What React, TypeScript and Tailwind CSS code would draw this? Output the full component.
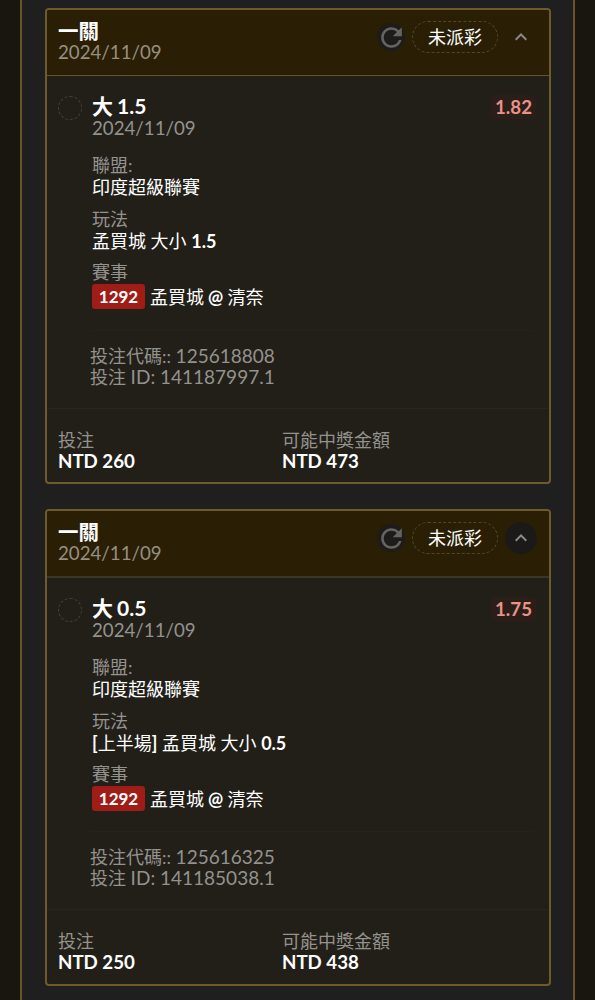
import clsx from 'clsx';
import React from 'react';
import { MdKeyboardArrowUp, MdRefresh } from 'react-icons/md';

interface Bet {
  name: string;
  pick: string;
  date: string;
  odds: string;
  period?: string;
  market: string;
  line: string;
  code: string;
  id: string;
  stake: string;
  payout: string;
  focused: boolean;
}

const bets: Bet[] = [
  {
    name: '一關',
    pick: '大 1.5',
    date: '2024/11/09',
    odds: '1.82',
    market: '孟買城 大小',
    line: '1.5',
    code: '125618808',
    id: '141187997.1',
    stake: 'NTD 260',
    payout: 'NTD 473',
    focused: false,
  },
  {
    name: '一關',
    pick: '大 0.5',
    date: '2024/11/09',
    odds: '1.75',
    period: '上半場',
    market: '孟買城 大小',
    line: '0.5',
    code: '125616325',
    id: '141185038.1',
    stake: 'NTD 250',
    payout: 'NTD 438',
    focused: true,
  },
];

function BetHeader({ bet }: { bet: Bet }) {
  return (
    <div
      className={clsx(
        'flex items-start justify-between bg-[#2a1f05] pl-[11px] pr-3 pt-[10px]',
        bet.focused ? 'h-[67px] border-b-2 border-[#3b3726]' : 'h-[66px] border-b border-[#62542f]'
      )}
    >
      <div>
        <div className="text-[20.5px] font-bold text-white">{bet.name}</div>
        <div className="text-[18.7px] leading-[21px] text-[#978f80]">{bet.date}</div>
      </div>
      <div className="mt-px flex items-center">
        <div className="flex h-7 w-7 items-center justify-center rounded-full bg-[#1e1c1a] text-[#66645f]">
          <MdRefresh size={31} className="shrink-0" />
        </div>
        <div className="ml-[7px] flex h-8 w-[86px] items-center justify-center rounded-full border border-dashed border-[#514729] text-white">
          未派彩
        </div>
        <div
          className={clsx(
            'ml-[7px] flex h-8 w-8 items-center justify-center rounded-full text-[#8d8b86]',
            bet.focused && 'bg-[#1c1a19]'
          )}
        >
          <MdKeyboardArrowUp size={24} />
        </div>
      </div>
    </div>
  );
}

function BetCard({ bet }: { bet: Bet }) {
  return (
    <div
      className={clsx(
        'flex flex-col overflow-hidden rounded border-2 border-[#6f5a2b] bg-[#221f19]',
        bet.focused ? 'h-[477px]' : 'h-[476px]'
      )}
    >
      <BetHeader bet={bet} />

      <div className={clsx('flex pl-[11px] pr-[13px] pt-5', bet.focused ? 'h-[253px]' : 'h-[254px]')}>
        <div className="h-6 w-6 shrink-0 rounded-full border border-dashed border-[#45423b]" />
        <div className="ml-[10px] flex-1">
          <div className="text-[21px] leading-[19px] font-bold text-white [word-spacing:-1px]">{bet.pick}</div>
          <div className="mt-[2px] text-[18.7px] text-[#94928d]">{bet.date}</div>

          <div className="mt-[15px] text-[#94928d]">聯盟:</div>
          <div className="text-white">印度超級聯賽</div>
          <div className="mt-[10px] text-[#94928d]">玩法</div>
          <div className="text-white">
            {bet.period && (
              <>
                <span className="font-bold">[</span>
                {bet.period}
                <span className="font-bold">]</span>{' '}
              </>
            )}
            {bet.market} <span className="font-bold">{bet.line}</span>
          </div>
          <div className="mt-[9px] text-[#94928d]">賽事</div>
          <div className="mt-px flex items-center text-white">
            <span className="mr-[5px] flex h-[25px] w-[53px] items-center justify-center rounded-[3px] bg-[#9f1c17] text-[17px] font-bold">
              1292
            </span>
            <span className="[word-spacing:-0.5px]">
              孟買城 <span className="font-bold">@</span> 清奈
            </span>
          </div>
        </div>
        <div className="-mt-px flex h-6 items-center justify-center rounded bg-[#2b1e18] px-1 text-[18.7px] font-bold text-[#e8938a]">
          {bet.odds}
        </div>
      </div>

      {/* Bet references */}
      <div className="ml-[43px] mr-4 h-[78px] border-t border-[#25221c] pt-[14px] leading-[21px] text-[#94928d]">
        <div>
          投注代碼:: <span className="text-[19px]">{bet.code}</span>
        </div>
        <div className="leading-5">
          投注 <span className="text-[19px]">ID: {bet.id}</span>
        </div>
      </div>

      {/* Stake and payout */}
      <div className="flex flex-1 border-t border-[#28251d] pl-[11px] pt-[21px] leading-[21px]">
        <div className="w-56">
          <div className="text-[#94928d]">投注</div>
          <div className="text-[18.7px] font-bold text-white">{bet.stake}</div>
        </div>
        <div>
          <div className="text-[#94928d]">可能中獎金額</div>
          <div className="text-[18.7px] font-bold text-white">{bet.payout}</div>
        </div>
      </div>
    </div>
  );
}

export default function App() {
  return (
    <div className="h-[1000px] overflow-hidden bg-[#19150f] px-5 font-[Lato,'Noto_Sans_CJK_TC',sans-serif] text-[18px] leading-[22px]">
      <div className="flex h-full flex-col gap-[25px] border-x-2 border-[#6b541f] bg-[#1f1f20] pl-[23px] pr-[22px] pt-2">
        {bets.map((bet) => (
          <BetCard key={bet.id} bet={bet} />
        ))}
      </div>
    </div>
  );
}
